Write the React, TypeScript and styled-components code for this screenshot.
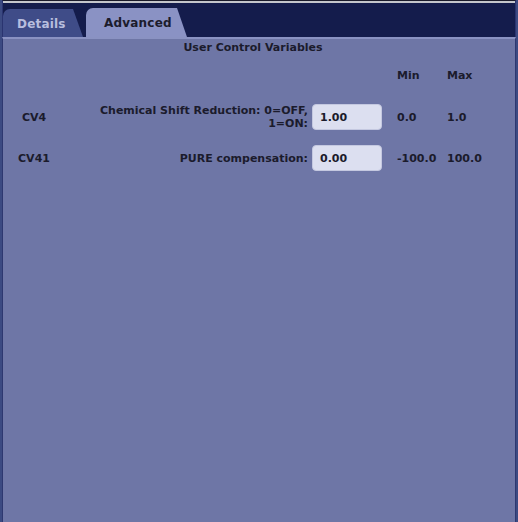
import React from "react";
import styled, { createGlobalStyle } from "styled-components";

const Global = createGlobalStyle`
  html, body { margin: 0; padding: 0; background: #6e76a6; }
  body { font-family: "DejaVu Sans", "Liberation Sans", sans-serif; }
`;

const Frame = styled.div`
  width: 518px;
  height: 522px;
  box-sizing: border-box;
  display: flex;
  flex-direction: column;
  background: #6e76a6;
  border-left: 2px solid #3c4a82;
  border-right: 2px solid #3c4a82;
  overflow: hidden;
`;

const Header = styled.div`
  height: 37px;
  box-sizing: border-box;
  background: #141c4c;
  border-top: 1px solid #1a1a2a;
  box-shadow: inset 0 2px 0 #c4c6cc;
  display: flex;
  align-items: flex-end;
  gap: 3px;
  padding-left: 0;
  border-left: 1px solid #2a3470;
  border-right: 1px solid #2a3470;
`;

const Tab = styled.div<{ $active?: boolean }>`
  height: ${(p) => (p.$active ? 29 : 28)}px;
  width: ${(p) => (p.$active ? 101 : 80)}px;
  box-sizing: border-box;
  display: flex;
  align-items: center;
  padding-left: ${(p) => (p.$active ? 18 : 14)}px;
  padding-top: 1px;
  background: ${(p) => (p.$active ? "#8a92c4" : "#3f4c88")};
  color: ${(p) => (p.$active ? "#1c1c2c" : "#b8bede")};
  border-top-left-radius: 7px;
  clip-path: polygon(0 0, calc(100% - 10px) 0, 100% 100%, 0 100%);
  font-weight: bold;
  font-size: 12px;
  letter-spacing: 0.2px;
`;

const Panel = styled.div`
  flex: 1;
  border-top: 2px solid #8a92c2;
  border-left: 1px solid #2e3870;
  border-right: 1px solid #2e3870;
  display: flex;
  flex-direction: column;
  color: #1b1b2c;
  font-weight: bold;
  font-size: 11px;
`;

const Title = styled.div`
  height: 16px;
  line-height: 16px;
  margin-top: 1px;
  text-align: center;
  font-size: 11px;
  padding-right: 12px;
`;

const Grid = styled.div`
  margin-top: 11px;
  display: grid;
  grid-template-columns: 62px 247px 70px 15px 50px 1fr;
  grid-template-rows: 22px 26px 26px;
  row-gap: 15px;
  column-gap: 0;
`;

const Cell = styled.div<{ $col: number; $align?: string }>`
  grid-column: ${(p) => p.$col};
  display: flex;
  align-items: center;
  justify-content: ${(p) => p.$align || "flex-start"};
`;

const HeadCell = styled.div<{ $col: number }>`
  grid-column: ${(p) => p.$col};
  line-height: 18px;
`;

const Label = styled.div`
  grid-column: 2;
  text-align: right;
  line-height: 13px;
  padding-right: 4px;
  align-self: center;
`;

const Input = styled.div`
  grid-column: 3;
  box-sizing: border-box;
  height: 26px;
  border-radius: 4px;
  background: #dcdff0;
  border: 1px solid #c4c8e0;
  display: flex;
  align-items: center;
  padding-left: 7px;
  color: #1b1b2c;
`;

const rows = [
  { id: "CV4", label: ["Chemical Shift Reduction: 0=OFF,", "1=ON:"], value: "1.00", min: "0.0", max: "1.0" },
  { id: "CV41", label: ["PURE compensation:"], value: "0.00", min: "-100.0", max: "100.0" },
];

export default function App() {
  return (
    <>
      <Global />
      <Frame>
        <Header>
          <Tab>Details</Tab>
          <Tab $active>Advanced</Tab>
        </Header>
        <Panel>
          <Title>User Control Variables</Title>
          <Grid>
            <HeadCell $col={5}>Min</HeadCell>
            <HeadCell $col={6}>Max</HeadCell>
            {rows.map((r) => (
              <React.Fragment key={r.id}>
                <Cell $col={1} $align="center">{r.id}</Cell>
                <Label>
                  {r.label.map((l) => (
                    <div key={l}>{l}</div>
                  ))}
                </Label>
                <Input>{r.value}</Input>
                <Cell $col={5}>{r.min}</Cell>
                <Cell $col={6}>{r.max}</Cell>
              </React.Fragment>
            ))}
          </Grid>
        </Panel>
      </Frame>
    </>
  );
}
